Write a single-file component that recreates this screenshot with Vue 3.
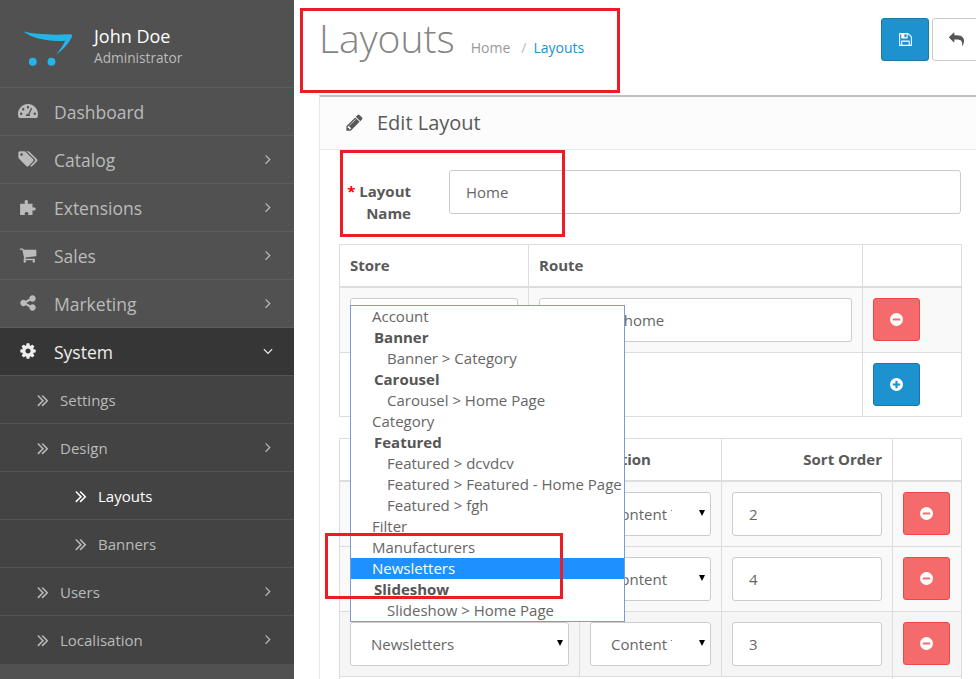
<script setup>
const icons = {
  dashboard: { box: '0 0 20 16', d: 'M10 1C4.500 1 0 5.500 0 11c0 1.500.3 2.800.9 4h18.200c.6-1.200.9-2.500.9-4C20 5.500 15.500 1 10 1zM10 3a1.200 1.200 0 1 1 0 2.400A1.200 1.200 0 0 1 10 3zM5.200 5a1.200 1.200 0 1 1 0 2.400 1.200 1.200 0 0 1 0-2.400zM3.200 9.600a1.200 1.200 0 1 1 0 2.400 1.200 1.200 0 0 1 0-2.400zM14.200 5.400l-2.800 6.100c.5.4.8.9.8 1.500H7.800c0-1.200 1-2.200 2.200-2.200l.3 0 2.800-6zM16.800 9.600a1.200 1.200 0 1 1 0 2.400 1.200 1.200 0 0 1 0-2.400z' },
  tags: { box: '0 0 1792 1792', d: 'M384 448q0-53-37.5-90.5t-90.5-37.5-90.5 37.5-37.5 90.5 37.5 90.5 90.5 37.5 90.5-37.5 37.5-90.5zm1067 576q0 53-37 90l-491 492q-39 37-91 37-53 0-90-37l-715-716q-38-37-64.5-101t-26.5-117v-416q0-52 38-90t90-38h416q53 0 117 26.5t102 64.5l715 714q37 39 37 91zm384 0q0 53-37 90l-491 492q-39 37-91 37-36 0-59-14t-53-45l470-470q37-37 37-90 0-52-37-91l-715-714q-38-38-102-64.5t-117-26.5h224q53 0 117 26.5t102 64.5l715 714q37 39 37 91z' },
  puzzle: { box: '0 0 16 16', d: 'M1 5h4.200c.3 0-.2-.8-.2-1.700C5 2.300 5.700 1.700 6.500 1.700S8 2.300 8 3.300c0 .9-.5 1.700-.2 1.700H12v3.400c0 .3.7-.2 1.300-.2.9 0 1.500.7 1.500 1.500s-.6 1.500-1.500 1.500c-.6 0-1.300-.5-1.300-.2V15H8.200c-.3 0 .2-.6.2-1.200 0-.9-.8-1.400-1.700-1.400S5 12.900 5 13.800c0 .6.5 1.200.2 1.200H1z' },
  cart: { box: '0 0 1792 1792', d: 'M704 1536q0 52-38 90t-90 38-90-38-38-90 38-90 90-38 90 38 38 90zm896 0q0 52-38 90t-90 38-90-38-38-90 38-90 90-38 90 38 38 90zm128-1088v512q0 24-16.5 42.5t-40.5 21.5l-1044 122q13 60 13 70 0 16-24 64h920q26 0 45 19t19 45-19 45-45 19h-1024q-26 0-45-19t-19-45q0-11 8-31.5t16-36 21.5-40 15.5-29.5l-177-823h-204q-26 0-45-19t-19-45 19-45 45-19h256q16 0 28.5 6.5t19.5 15.5 13 24.5 8 26 5.5 29.5 4.5 26h1201q26 0 45 19t19 45z' },
  share: { box: '0 0 1792 1792', d: 'M1344 1024q133 0 226.5 93.5t93.5 226.5-93.5 226.5-226.5 93.5-226.5-93.5-93.5-226.5q0-12 2-34l-360-180q-92 86-218 86-133 0-226.5-93.5t-93.5-226.5 93.5-226.5 226.5-93.5q126 0 218 86l360-180q-2-22-2-34 0-133 93.5-226.5t226.5-93.5 226.5 93.5 93.5 226.5-93.5 226.5-226.5 93.5q-126 0-218-86l-360 180q2 22 2 34t-2 34l360 180q92-86 218-86z' },
  cog: { box: '0 0 1792 1792', d: 'M1152 896q0-106-75-181t-181-75-181 75-75 181 75 181 181 75 181-75 75-181zm512-109v222q0 12-8 23t-20 13l-185 28q-19 54-39 91 35 50 107 138 10 12 10 25t-9 23q-27 37-99 108t-94 71q-12 0-26-9l-138-108q-44 23-91 38-16 136-29 186-7 28-36 28h-222q-14 0-24.5-8.5t-11.5-21.5l-28-184q-49-16-90-37l-141 107q-10 9-25 9-14 0-25-11-126-114-165-168-7-10-7-23 0-12 8-23 15-21 51-66.5t54-70.5q-27-50-41-99l-183-27q-13-2-21-12.5t-8-23.5v-222q0-12 8-23t19-13l186-28q14-46 39-92-40-57-107-138-10-12-10-24 0-10 9-23 26-36 98.5-107.5t94.5-71.5q13 0 26 10l138 107q44-23 91-38 16-136 29-186 7-28 36-28h222q14 0 24.5 8.5t11.5 21.5l28 184q49 16 90 37l142-107q9-9 24-9 13 0 25 10 129 119 165 170 7 8 7 22 0 12-8 23-15 21-51 66.5t-54 70.5q26 50 41 98l183 28q13 2 21 12.5t8 23.5z' },
  right: { box: '0 0 1792 1792', d: 'M1171 960q0 13-10 23l-466 466q-10 10-23 10t-23-10l-50-50q-10-10-10-23t10-23l393-393-393-393q-10-10-10-23t10-23l50-50q10-10 23-10t23 10l466 466q10 10 10 23z' },
  down: { box: '0 0 1792 1792', d: 'M1395 736q0 13-10 23l-466 466q-10 10-23 10t-23-10l-466-466q-10-10-10-23t10-23l50-50q10-10 23-10t23 10l393 393 393-393q10-10 23-10t23 10l50 50q10 10 10 23z' },
  dbl: { box: '0 0 1792 1792', d: 'M979 960q0 13-10 23l-466 466q-10 10-23 10t-23-10l-50-50q-10-10-10-23t10-23l393-393-393-393q-10-10-10-23t10-23l50-50q10-10 23-10t23 10l466 466q10 10 10 23zm384 0q0 13-10 23l-466 466q-10 10-23 10t-23-10l-50-50q-10-10-10-23t10-23l393-393-393-393q-10-10-10-23t10-23l50-50q10-10 23-10t23 10l466 466q10 10 10 23z' },
  pencil: { box: '0 0 1792 1792', d: 'M491 1536l91-91-235-235-91 91v107h128v128h107zm523-928q0-22-22-22-10 0-17 7l-542 542q-7 7-7 17 0 22 22 22 10 0 17-7l542-542q7-7 7-17zm-54-192l416 416-832 832h-416v-416zm683 96q0 53-37 90l-166 166-416-416 166-165q36-38 90-38 53 0 91 38l235 234q37 39 37 91z' },
  save: { box: '0 0 1792 1792', d: 'M512 1536h768v-384h-768v384zm896 0h128v-896q0-14-10-38.5t-20-34.5l-281-281q-10-10-34-20t-39-10v416q0 40-28 68t-68 28h-576q-40 0-68-28t-28-68v-416h-128v1280h128v-416q0-40 28-68t68-28h832q40 0 68 28t28 68v416zm-384-928v-320q0-13-9.5-22.5t-22.5-9.5h-192q-13 0-22.5 9.5t-9.5 22.5v320q0 13 9.5 22.5t22.5 9.5h192q13 0 22.5-9.5t9.5-22.5zm640 32v928q0 40-28 68t-68 28h-1344q-40 0-68-28t-28-68v-1344q0-40 28-68t68-28h928q40 0 88 20t76 48l280 280q28 28 48 76t20 88z' },
  reply: { box: '0 0 1792 1792', d: 'M1792 1120q0 166-127 451-3 7-10.5 24t-13.5 30-13 22q-12 17-28 17-15 0-23.5-10t-8.5-25q0-9 2.5-26.5t2.5-23.5q5-68 5-123 0-101-17.5-181t-48.5-138.5-80-101-105.5-69.5-133-42.5-154-21.5-175.5-6h-224v256q0 26-19 45t-45 19-45-19l-512-512q-19-19-19-45t19-45l512-512q19-19 45-19t45 19 19 45v256h224q713 0 875 403 53 134 53 333z' },
  minus: { box: '0 0 1792 1792', d: 'M1344 960v-128q0-26-19-45t-45-19h-768q-26 0-45 19t-19 45v128q0 26 19 45t45 19h768q26 0 45-19t19-45zm320-64q0 209-103 385.5t-279.5 279.5-385.5 103-385.5-103-279.5-279.5-103-385.5 103-385.5 279.5-279.5 385.5-103 385.5 103 279.5 279.5 103 385.5z' },
  plus: { box: '0 0 1792 1792', d: 'M1344 960v-128q0-26-19-45t-45-19h-256v-256q0-26-19-45t-45-19h-128q-26 0-45 19t-19 45v256h-256q-26 0-45 19t-19 45v128q0 26 19 45t45 19h256v256q0 26 19 45t45 19h128q26 0 45-19t19-45v-256h256q26 0 45-19t19-45zm320-64q0 209-103 385.5t-279.5 279.5-385.5 103-385.5-103-279.5-279.5-103-385.5 103-385.5 279.5-279.5 385.5-103 385.5 103 279.5 279.5 103 385.5z' }
}

const menu = [
  { name: 'Dashboard', icon: 'dashboard' },
  { name: 'Catalog', icon: 'tags', arrow: 'right' },
  { name: 'Extensions', icon: 'puzzle', arrow: 'right' },
  { name: 'Sales', icon: 'cart', arrow: 'right' },
  { name: 'Marketing', icon: 'share', arrow: 'right' },
  { name: 'System', icon: 'cog', arrow: 'down', open: true }
]
const subMenu = [
  { name: 'Settings', level: 2 },
  { name: 'Design', level: 2, arrow: 'right' },
  { name: 'Layouts', level: 3, active: true },
  { name: 'Banners', level: 3 },
  { name: 'Users', level: 2, arrow: 'right' },
  { name: 'Localisation', level: 2, arrow: 'right' }
]

const options = [
  { label: 'Account', type: 'plain' },
  { label: 'Banner', type: 'group' },
  { label: 'Banner > Category', type: 'child' },
  { label: 'Carousel', type: 'group' },
  { label: 'Carousel > Home Page', type: 'child' },
  { label: 'Category', type: 'plain' },
  { label: 'Featured', type: 'group' },
  { label: 'Featured > dcvdcv', type: 'child' },
  { label: 'Featured > Featured - Home Page', type: 'child' },
  { label: 'Featured > fgh', type: 'child' },
  { label: 'Filter', type: 'plain' },
  { label: 'Manufacturers', type: 'plain' },
  { label: 'Newsletters', type: 'plain', selected: true },
  { label: 'Slideshow', type: 'group' },
  { label: 'Slideshow > Home Page', type: 'child' }
]

const moduleRows = [
  { module: 'Account', position: 'Content Top', sort: '2' },
  { module: 'Filter', position: 'Content Bottom', sort: '4' },
  { module: 'Newsletters', position: 'Content Top', sort: '3' }
]
</script>

<template>
  <div class="page">
    <aside class="sidebar">
      <div class="profile">
        <svg class="logo" viewBox="0 0 54 36">
          <path d="M0 1C10 4 30 5 48 4c2 0 2.500 1.500 1.500 3.500C46 14 40 20 34 25c3-5 7-10 9-14.500C28 12 10 9 0 1z" fill="#23b4e8" />
          <circle cx="10" cy="32" r="4" fill="#23b4e8" />
          <circle cx="29" cy="32" r="4" fill="#23b4e8" />
        </svg>
        <div>
          <div class="user-name">John Doe</div>
          <div class="user-role">Administrator</div>
        </div>
      </div>

      <div
        v-for="item in menu"
        :key="item.name"
        class="menu-item"
        :class="{ open: item.open }"
      >
        <svg class="menu-icon" :viewBox="icons[item.icon].box"><path :d="icons[item.icon].d" /></svg>
        <span class="menu-name">{{ item.name }}</span>
        <svg v-if="item.arrow" class="menu-arrow" :viewBox="icons[item.arrow].box"><path :d="icons[item.arrow].d" /></svg>
      </div>

      <div
        v-for="item in subMenu"
        :key="item.name"
        class="sub-item"
        :class="['level-' + item.level, { active: item.active }]"
      >
        <svg class="sub-icon" :viewBox="icons.dbl.box"><path :d="icons.dbl.d" /></svg>
        <span class="sub-name">{{ item.name }}</span>
        <svg v-if="item.arrow" class="menu-arrow" :viewBox="icons[item.arrow].box"><path :d="icons[item.arrow].d" /></svg>
      </div>
    </aside>

    <main class="content">
      <header class="page-header">
        <h1>Layouts</h1>
        <div class="breadcrumb">
          <span>Home</span>
          <span class="crumb-sep">/</span>
          <span class="crumb-current">Layouts</span>
        </div>
        <div class="header-buttons">
          <button class="btn btn-primary head-btn"><svg class="btn-icon" :viewBox="icons.save.box"><path :d="icons.save.d" /></svg></button>
          <button class="btn btn-default head-btn"><svg class="btn-icon" :viewBox="icons.reply.box"><path :d="icons.reply.d" /></svg></button>
        </div>
      </header>

      <section class="panel">
        <div class="panel-heading">
          <svg class="pencil" :viewBox="icons.pencil.box"><path :d="icons.pencil.d" /></svg>
          <span>Edit Layout</span>
        </div>

        <div class="panel-body">
          <div class="form-row">
            <label class="form-label"><span class="required">*</span> Layout Name</label>
            <input class="control name-input" value="Home" />
          </div>

          <table class="grid route-table">
            <colgroup><col style="width: 189px" /><col style="width: 334px" /><col style="width: 99px" /></colgroup>
            <thead>
              <tr><th>Store</th><th>Route</th><th></th></tr>
            </thead>
            <tbody>
              <tr class="striped">
                <td><div class="select-wrap"><select class="control"><option>Default</option></select></div></td>
                <td><input class="control" value="common/home" /></td>
                <td><button class="btn btn-danger"><svg class="btn-icon" :viewBox="icons.minus.box"><path :d="icons.minus.d" /></svg></button></td>
              </tr>
              <tr>
                <td colspan="2"></td>
                <td><button class="btn btn-primary"><svg class="btn-icon" :viewBox="icons.plus.box"><path :d="icons.plus.d" /></svg></button></td>
              </tr>
            </tbody>
          </table>

          <table class="grid module-table">
            <colgroup><col style="width: 240px" /><col style="width: 142px" /><col style="width: 171px" /><col style="width: 69px" /></colgroup>
            <thead>
              <tr><th>Module</th><th>Position</th><th class="right">Sort Order</th><th></th></tr>
            </thead>
            <tbody>
              <tr v-for="(row, i) in moduleRows" :key="i" :class="i === 2 ? 'striped-dark' : 'striped'">
                <td><div class="select-wrap"><select class="control"><option>{{ row.module }}</option></select></div></td>
                <td><div class="select-wrap"><select class="control"><option>{{ row.position }}</option></select></div></td>
                <td><input class="control" :value="row.sort" /></td>
                <td><button class="btn btn-danger"><svg class="btn-icon" :viewBox="icons.minus.box"><path :d="icons.minus.d" /></svg></button></td>
              </tr>
              <tr>
                <td colspan="3"></td>
                <td><button class="btn btn-primary"><svg class="btn-icon" :viewBox="icons.plus.box"><path :d="icons.plus.d" /></svg></button></td>
              </tr>
            </tbody>
          </table>
        </div>
      </section>
    </main>

    <!-- open select list, lies over the tables -->
    <ul class="dropdown">
      <li
        v-for="opt in options"
        :key="opt.label"
        :class="[opt.type, { selected: opt.selected }]"
      >{{ opt.label }}</li>
    </ul>

    <!-- red annotation boxes drawn on the screenshot -->
    <div class="mark mark-title"></div>
    <div class="mark mark-label"></div>
    <div class="mark mark-option"></div>
  </div>
</template>

<style>
html, body { margin: 0; overflow: hidden; }
</style>

<style scoped>
.page {
  position: relative;
  display: flex;
  width: 976px;
  height: 679px;
  overflow: hidden;
  background: #fff;
  font-family: "Open Sans", "Noto Sans", sans-serif;
  font-size: 15px;
  color: #666;
}

/* sidebar */
.sidebar {
  flex: 0 0 294px;
  background: #515151;
  color: #bbb;
}
.profile {
  display: flex;
  align-items: center;
  gap: 18px;
  height: 87px;
  padding-left: 23px;
  border-bottom: 1px solid #5c5c5c;
}
.logo { width: 53px; height: 36px; margin-top: 9px; }
.user-name { font-size: 18px; line-height: 24px; color: #fff; margin-top: 3px; }
.user-role { font-size: 13.700px; line-height: 19px; color: #bbb; }

.menu-item {
  display: flex;
  align-items: center;
  height: 47px;
  border-bottom: 1px solid #5c5c5c;
  font-size: 17.500px;
}
.menu-item.open { background: #363636; color: #eee; border-bottom-color: #555; }
.menu-icon { flex: 0 0 20px; width: 20px; height: 18px; margin: -2px 16px 0 18px; fill: #bbb; }
.menu-item.open .menu-icon { fill: #eee; }
.menu-name { flex: 1; }
.menu-arrow { flex: 0 0 16px; width: 16px; height: 16px; margin: -2px 18px 0 0; fill: #bbb; }
.menu-item.open .menu-arrow { fill: #eee; }

.sub-item {
  display: flex;
  align-items: center;
  height: 47px;
  background: #434343;
  border-bottom: 1px solid #535353;
  font-size: 15px;
}
.sub-item:last-child { border-bottom-color: #434343; }
.sub-icon { flex: 0 0 20px; width: 20px; height: 20px; fill: #bbb; margin-right: 7px; }
.level-2 .sub-icon { margin-left: 33px; }
.level-3 .sub-icon { margin-left: 71px; }
.sub-name { flex: 1; }
.sub-item.active { color: #fff; }
.sub-item.active .sub-icon { fill: #fff; }

/* page header */
.content { flex: 1; min-width: 0; padding-left: 26px; }
.page-header {
  display: flex;
  align-items: flex-start;
  height: 95px;
  margin-left: -1px;
}
.page-header h1 {
  margin: 11px 0 0;
  font-size: 39px;
  font-weight: 300;
  line-height: 53px;
  color: #848484;
}
.breadcrumb {
  display: flex;
  margin: 38px 0 0 16px;
  font-size: 14px;
  line-height: 20px;
  color: #999;
}
.crumb-sep { margin: 0 7px 0 11px; color: #bbb; }
.crumb-current { color: #1e91cf; }
.header-buttons {
  display: flex;
  gap: 3px;
  margin: 18px -36px 0 auto;
}

/* buttons */
.btn {
  display: flex;
  align-items: center;
  justify-content: center;
  width: 47px;
  height: 43px;
  padding: 0;
  border: 1px solid #ccc;
  border-radius: 3px;
  background: #fff;
}
.head-btn { width: 48px; height: 43px; }
.btn-icon { width: 15px; height: 15px; }
.btn-primary { background: #1e91cf; border-color: #1978ab; }
.btn-primary .btn-icon { fill: #fff; }
.btn-default .btn-icon { fill: #555; }
.btn-default.head-btn { width: 80px; justify-content: flex-start; padding-left: 16px; }
.btn-danger { background: #f56b6b; border-color: #f24545; }
.btn-danger .btn-icon { fill: #fff; }

/* panel */
.panel {
  width: 660px;
  box-sizing: border-box;
  border: 1px solid #e8e8e8;
  border-top: 2px solid #bfbfbf;
  margin-left: -1px;
  padding-left: 1px;
}
.panel-heading {
  display: flex;
  align-items: center;
  height: 53px;
  margin-left: -1px;
  padding: 0 0 2px 25px;
  box-sizing: border-box;
  background: #fcfcfc;
  border-bottom: 1px solid #e8e8e8;
  font-size: 20px;
  color: #595959;
}
.pencil { width: 19px; height: 19px; margin-right: 13px; fill: #595959; }
.panel-body { padding: 20px 18px 0; }

/* form */
.form-row {
  display: flex;
  align-items: flex-start;
  margin-bottom: 20px;
  height: 54px;
}
.form-label {
  flex: 0 0 72px;
  margin-right: 38px;
  padding-top: 10px;
  font-weight: 700;
  line-height: 22px;
  text-align: right;
  color: #595959;
}
.required { color: #f00; }
.control {
  display: block;
  width: 100%;
  height: 44px;
  box-sizing: border-box;
  padding: 0 16px;
  border: 1px solid #ccc;
  border-radius: 3px;
  background: #fff;
  font: inherit;
  color: #666;
  outline: none;
}
.name-input { flex: 1; width: auto; margin-right: -1px; }

/* tables */
.grid {
  width: 622px;
  table-layout: fixed;
  border-collapse: collapse;
}
.route-table { margin-bottom: 21px; }
.grid th, .grid td { border: 1px solid #ddd; padding: 10px; vertical-align: top; }
.grid th {
  height: 20px;
  border-bottom-width: 2px;
  font-weight: 700;
  line-height: 21px;
  text-align: left;
  color: #595959;
}
.grid th.right { text-align: right; }
.striped td { background: #f9f9f9; }
.striped-dark td { background: #f5f5f5; }

.select-wrap { position: relative; }
.select-wrap select {
  appearance: none;
  padding: 0 38px 0 20px;
}
.select-wrap::after {
  content: "";
  position: absolute;
  right: 6px;
  top: 18px;
  border: 3px solid transparent;
  border-top: 6px solid #000;
  border-bottom: 0;
}

/* open list */
.dropdown {
  position: absolute;
  left: 350px;
  top: 305px;
  width: 273px;
  margin: 0;
  padding: 0;
  list-style: none;
  background: #fff;
  border: 1px solid #7a9cd3;
}
.dropdown li {
  height: 21px;
  line-height: 21px;
  white-space: nowrap;
  color: #666;
  overflow: hidden;
}
.dropdown .plain { padding-left: 21px; }
.dropdown .group { padding-left: 23px; font-weight: 700; color: #555; }
.dropdown .child { padding-left: 36px; }
.dropdown .selected { background: #1e90ff; color: #fff; }

/* annotations */
.mark {
  position: absolute;
  box-sizing: border-box;
  border: 3px solid #ed1c24;
}
.mark-title { left: 300px; top: 8px; width: 320px; height: 85px; }
.mark-label { left: 340px; top: 150px; width: 225px; height: 87px; }
.mark-option { left: 325px; top: 533px; width: 238px; height: 66px; }
</style>
